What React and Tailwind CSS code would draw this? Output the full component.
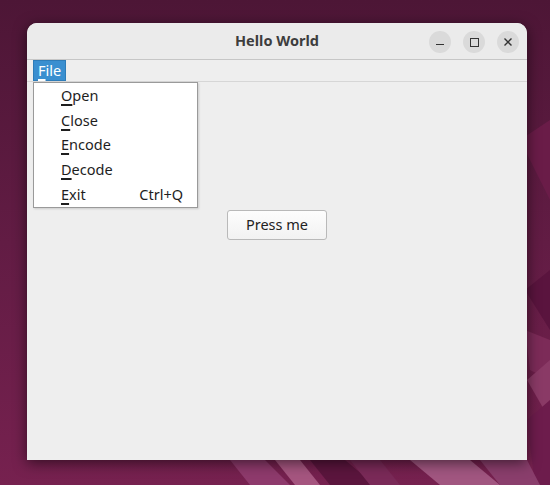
import React from 'react';

const font = { fontFamily: '"Noto Sans", "DejaVu Sans", sans-serif' };

const menuItems = [
  { key: 'O', rest: 'pen' },
  { key: 'C', rest: 'lose' },
  { key: 'E', rest: 'ncode' },
  { key: 'D', rest: 'ecode' },
  { key: 'E', rest: 'xit', shortcut: 'Ctrl+Q' },
];

const Wallpaper = () => (
  <svg className="absolute inset-0" width="550" height="485" viewBox="0 0 550 485">
    <defs>
      <linearGradient id="bg" x1="0" y1="0" x2="0" y2="1">
        <stop offset="0" stopColor="#4d1636" />
        <stop offset="0.5" stopColor="#621c44" />
        <stop offset="1" stopColor="#76214f" />
      </linearGradient>
    </defs>
    <rect width="550" height="485" fill="url(#bg)" />
    <polygon points="520,140 550,120 550,200" fill="#6a1c48" />
    <polygon points="525,290 550,270 550,330" fill="#5a143e" />
    <polygon points="525,330 550,340 550,380 530,370" fill="#7c2b58" />
    <polygon points="527,380 550,360 550,420" fill="#8a3a66" />
    <polygon points="527,420 550,400 550,485 535,485" fill="#6d1c4c" />
    <polygon points="230,460 265,460 290,485 250,485" fill="#8e3a6c" />
    <polygon points="275,460 300,460 320,485 295,485" fill="#a5557f" />
    <polygon points="310,460 345,460 375,485 330,485" fill="#5b153d" />
    <polygon points="350,460 380,460 400,485 370,485" fill="#7a2a58" />
    <polygon points="410,460 470,460 500,485 440,485" fill="#a15680" />
    <polygon points="480,460 527,460 540,485 500,485" fill="#8a3e6c" />
  </svg>
);

const WindowButton = ({ children }) => (
  <div className="w-[22px] h-[22px] rounded-full bg-[#dadada] flex items-center justify-center">
    {children}
  </div>
);

export default function App() {
  return (
    <div className="relative w-[550px] h-[485px] overflow-hidden" style={font}>
      <Wallpaper />
      <div className="relative ml-[27px] mt-[23px] w-[500px] h-[437px] rounded-t-[10px] bg-[#eeeeee] flex flex-col shadow-[0_3px_14px_rgba(0,0,0,0.55)]">
        {/* Title bar */}
        <div className="relative h-[37px] shrink-0 rounded-t-[10px] bg-[#ebebeb] border-b border-[#c6c6c6] flex items-center justify-center">
          <span className="text-[14.5px] font-bold text-[#3d3d3d]">Hello World</span>
          <div className="absolute right-[8px] top-[8px] flex gap-[12px]">
            <WindowButton>
              <div className="w-[8px] h-[1.5px] bg-[#333] mt-[5px]" />
            </WindowButton>
            <WindowButton>
              <div className="w-[9px] h-[9px] border-[1.5px] border-[#333]" />
            </WindowButton>
            <WindowButton>
              <svg width="10" height="10" viewBox="0 0 10 10">
                <path d="M1.5 1.5 L8.5 8.5 M8.5 1.5 L1.5 8.5" stroke="#333" strokeWidth="1.4" />
              </svg>
            </WindowButton>
          </div>
        </div>

        {/* Menu bar */}
        <div className="h-[22px] shrink-0 border-b border-[#d6d6d6] px-[6px] flex items-start">
          <div className="h-[21px] px-[4px] bg-[#3a8fd0] border border-[#2e7cb8] text-white text-[14.5px] leading-[18px]">
            <span className="underline underline-offset-[3px] decoration-[1.5px]">F</span>ile
          </div>
        </div>

        {/* Content */}
        <div className="relative flex-1 flex flex-col items-center">
          <button className="mt-[128px] w-[100px] h-[30px] rounded-[3px] border border-[#b9b9b9] bg-gradient-to-b from-[#fdfdfd] to-[#f2f2f2] text-[14.5px] text-[#222]">
            Press me
          </button>

          {/* File menu dropdown */}
          <div className="absolute left-[6px] top-[0px] w-[165px] h-[126px] bg-white border border-[#9a9a9a] shadow-[1px_1px_2px_rgba(0,0,0,0.15)]">
            {menuItems.map((item, i) => (
              <div key={i} className="h-[24.8px] pl-[27px] pr-[14px] flex items-center justify-between text-[14.5px] leading-[18px] text-[#1e1e1e] pb-[1px]">
                <span>
                  <span className="underline underline-offset-[3px] decoration-[1.5px]">{item.key}</span>
                  {item.rest}
                </span>
                {item.shortcut && <span>{item.shortcut}</span>}
              </div>
            ))}
          </div>
        </div>
      </div>
    </div>
  );
}
